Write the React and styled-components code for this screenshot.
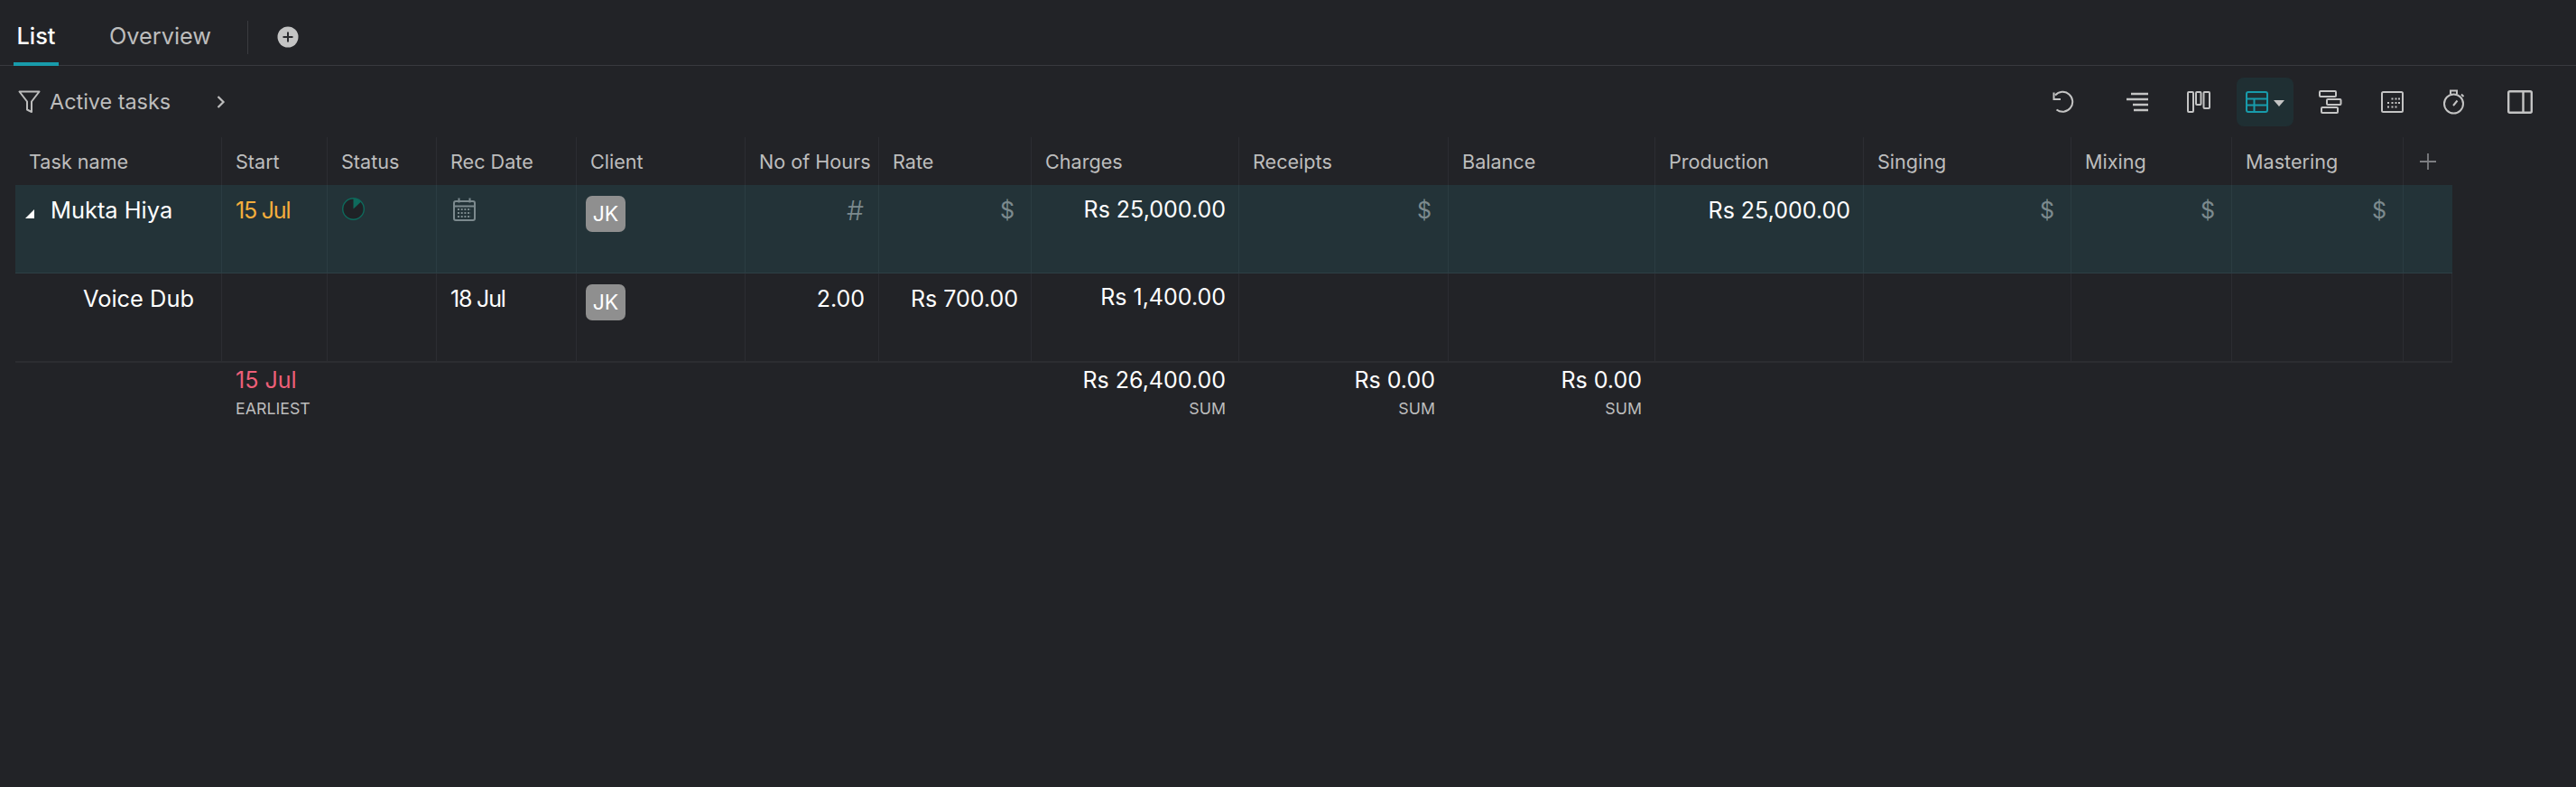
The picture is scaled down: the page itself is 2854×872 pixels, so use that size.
import React from 'react'
import styled, {createGlobalStyle} from 'styled-components'

const GlobalStyle = createGlobalStyle`
  html, body {
    margin: 0;
    padding: 0;
    height: 100%;
    background: #222327;
  }
  body {
    font-family: Inter, "Noto Sans", sans-serif;
    color: #fff;
    overflow: hidden;
  }
`

const COLUMNS = '229px 117px 121px 155px 187px 148px 169px 230px 232px 229px 231px 230px 178px 190px 54px'

const Page = styled.div`
  width: 2854px;
  height: 872px;
  background: #222327;
`

const TabBar = styled.div`
  display: flex;
  align-items: stretch;
  height: 72px;
  padding-left: 15px;
  border-bottom: 1px solid #38393e;
`

const Tab = styled.div`
  display: flex;
  align-items: center;
  justify-content: center;
  width: ${p => p.$width}px;
  height: 73px;
  padding-top: 9px;
  box-sizing: border-box;
  margin-right: ${p => p.$gap}px;
  font-size: 25.3px;
  font-weight: ${p => (p.$active ? 500 : 400)};
  color: ${p => (p.$active ? '#fff' : '#bdbdbd')};
  border-bottom: 4px solid ${p => (p.$active ? '#189bab' : 'transparent')};
`

const TabDivider = styled.div`
  width: 1px;
  height: 37px;
  margin: 23px 32px 0 0;
  background: #3a3b40;
`

const AddTab = styled.div`
  display: flex;
  align-items: center;
  height: 82px;
`

const Toolbar = styled.div`
  display: flex;
  align-items: center;
  height: 79px;
  padding-left: 20px;
  padding-right: 42px;
`

const FilterLabel = styled.span`
  margin-left: 10px;
  width: 184px;
  font-size: 23.4px;
  color: #bdbdbd;
`

const Tools = styled.div`
  display: flex;
  align-items: center;
  margin-left: auto;
`

const Tool = styled.div`
  display: flex;
  align-items: center;
  justify-content: center;
  gap: 6px;
  width: ${p => (p.$active ? 63 : 40)}px;
  height: 54px;
  margin-left: ${p => p.$gap || 0}px;
  border-radius: 8px;
  background: ${p => (p.$active ? '#1f2f33' : 'transparent')};
`

const Table = styled.div`
  width: 2700px;
  margin-left: 17px;
`

const Row = styled.div`
  display: grid;
  grid-template-columns: ${COLUMNS};
  height: ${p => p.$height}px;
  background: ${p => p.$bg || 'transparent'};
  border-bottom: ${p => p.$line || 'none'};
  box-sizing: border-box;
`

const HeadCell = styled.div`
  display: flex;
  align-items: center;
  padding-left: 15px;
  font-size: 21.6px;
  color: #bdbdbd;
  border-right: 1px solid #2c2d32;
  box-sizing: border-box;
  white-space: nowrap;
  &:last-child {
    border-right: none;
    padding-left: 17px;
  }
`

const Cell = styled.div`
  padding: ${p => p.$top || 12}px ${p => p.$right || 15}px 0 ${p => p.$left || 15}px;
  font-size: 25px;
  line-height: 32px;
  letter-spacing: ${p => (p.$tight ? '-1.2px' : 'normal')};
  text-align: ${p => (p.$num ? 'right' : 'left')};
  color: ${p => p.$color || '#fff'};
  border-right: 1px solid ${p => p.$border || '#2c2d32'};
  box-sizing: border-box;
  white-space: nowrap;
`

const Name = styled.div`
  display: flex;
  align-items: center;
  font-size: 25.4px;
`

const Expander = styled.span`
  width: 0;
  height: 0;
  margin: 8px 18px 0 10px;
  border-left: 10px solid transparent;
  border-bottom: 10px solid #fff;
`

const Placeholder = styled.span`
  font-size: ${p => p.$size || 25}px;
  color: #7c8a8e;
  font-weight: ${p => (p.$size ? 300 : 400)};
`

const Avatar = styled.div`
  display: flex;
  align-items: center;
  justify-content: center;
  width: 44px;
  height: 40px;
  margin: 0 0 0 -5px;
  border-radius: 7px;
  background: #8f8f8f;
  color: #fff;
  font-size: 23px;
`

const FootCell = styled.div`
  padding: 3px 15px 0;
  text-align: ${p => (p.$num ? 'right' : 'left')};
  box-sizing: border-box;
`

const FootValue = styled.div`
  font-size: 25px;
  line-height: 32px;
  color: ${p => p.$color || '#fff'};
  white-space: nowrap;
`

const FootLabel = styled.div`
  margin-top: 4px;
  font-size: 17.8px;
  line-height: 24px;
  color: #bdbdbd;
`

const PlusCircle = () => (
  <svg width="24" height="24" viewBox="0 0 24 24">
    <circle cx="12" cy="12" r="11.5" fill="#c4c4c4" />
    <path d="M12 6.500v11M6.500 12h11" stroke="#2a2b2f" strokeWidth="2" />
  </svg>
)

const FilterIcon = () => (
  <svg width="25" height="26" viewBox="0 0 25 26" fill="none" stroke="#bdbdbd" strokeWidth="2" strokeLinejoin="round">
    <path d="M1.500 1.500h22l-8.500 11v11.500l-5-2.500v-9z" />
  </svg>
)

const Chevron = () => (
  <svg width="12" height="16" viewBox="0 0 12 16" fill="none" stroke="#bdbdbd" strokeWidth="2.200">
    <path d="M2.500 2l6 6-6 6" />
  </svg>
)

const UndoIcon = () => (
  <svg width="26" height="26" viewBox="0 0 26 26" fill="none" stroke="#c4c4c4" strokeWidth="2">
    <path d="M5 5.500A11 11 0 1 1 6.500 21.500" />
    <path d="M3.500 2.500v7.500h7.500" />
  </svg>
)

const LinesIcon = () => (
  <svg width="26" height="22" viewBox="0 0 26 22" fill="none" stroke="#c4c4c4" strokeWidth="2.400">
    <path d="M6 2h19M1 8h24M8 14h17M9 20h16" />
  </svg>
)

const BoardIcon = () => (
  <svg width="26" height="24" viewBox="0 0 26 24" fill="none" stroke="#c4c4c4" strokeWidth="2">
    <rect x="1" y="1" width="6" height="22" rx="1" />
    <rect x="10" y="1" width="5.500" height="14" rx="1" />
    <rect x="18.500" y="1" width="6.500" height="18" rx="1" />
  </svg>
)

const TableIcon = () => (
  <svg width="25" height="24" viewBox="0 0 25 24" fill="none" stroke="#189bab" strokeWidth="2">
    <rect x="1" y="1" width="23" height="22" rx="2" />
    <path d="M1 8.500h23M1 15.500h23M9.500 8.500v14.500" />
  </svg>
)

const Caret = styled.span`
  width: 0;
  height: 0;
  margin-top: 3px;
  border-left: 6px solid transparent;
  border-right: 6px solid transparent;
  border-top: 7px solid #c4c4c4;
`

const GanttIcon = () => (
  <svg width="26" height="26" viewBox="0 0 26 26" fill="none" stroke="#c4c4c4" strokeWidth="2">
    <rect x="1" y="1" width="18" height="6" rx="1" />
    <rect x="9" y="10" width="15.500" height="6" rx="1" />
    <rect x="3" y="19" width="18" height="6" rx="1" />
  </svg>
)

const GridIcon = () => (
  <svg width="25" height="24" viewBox="0 0 25 24" fill="none" stroke="#c4c4c4">
    <rect x="1" y="1" width="23" height="22" rx="1.500" strokeWidth="2" />
    <path d="M11.500 8.500h2M15.500 8.500h2M19 8.500h2M7 13h2M11.500 13h2M15.500 13h2M19 13h2M7 17.500h2M11.500 17.500h2M15.500 17.500h2" strokeWidth="2" />
  </svg>
)

const TimerIcon = () => (
  <svg width="26" height="28" viewBox="0 0 26 28" fill="none" stroke="#c4c4c4" strokeWidth="2">
    <circle cx="12.500" cy="16" r="10.500" />
    <path d="M9 5V1.500h7V5M21 5.500l2.500 2.500M12 18l4.500-5.500" />
  </svg>
)

const PanelIcon = () => (
  <svg width="28" height="26" viewBox="0 0 28 26" fill="none" stroke="#c4c4c4" strokeWidth="2.400">
    <rect x="1.200" y="1.200" width="25.600" height="23.600" rx="1.500" />
    <path d="M17.500 1.200v23.600" />
  </svg>
)

const CellIcon = styled.svg`
  display: block;
  margin-top: 2px;
`

const StatusIcon = () => (
  <CellIcon width="25" height="25" viewBox="0 0 25 25">
    <circle cx="12.500" cy="12.500" r="11.800" fill="#1f2226" stroke="#0e6a5c" strokeWidth="1.400" />
    <path d="M12.500 12.500V1a11.500 11.500 0 0 1 8.500 3.500z" fill="#0e6a5c" />
  </CellIcon>
)

const CalendarIcon = () => (
  <CellIcon width="25" height="26" viewBox="0 0 25 26" fill="none" stroke="#7c8a8e">
    <rect x="1" y="4" width="23" height="21" rx="2" strokeWidth="2" />
    <path d="M1 9.500h23M6.500 0.500v5M18.500 0.500v5" strokeWidth="2" />
    <path d="M5 13h15M5 17h15M5 21h15" strokeWidth="2" strokeDasharray="2 1.700" />
  </CellIcon>
)

const AddIcon = () => (
  <svg width="20" height="20" viewBox="0 0 20 20" stroke="#7d7e82" strokeWidth="1.800">
    <path d="M10 1v18M1 10h18" />
  </svg>
)

const headers = ['Task name', 'Start', 'Status', 'Rec Date', 'Client', 'No of Hours', 'Rate', 'Charges', 'Receipts', 'Balance', 'Production', 'Singing', 'Mixing', 'Mastering']

const App = () => (
  <Page>
    <GlobalStyle />
    <TabBar>
      <Tab $active $width={50} $gap={57}>List</Tab>
      <Tab $width={111} $gap={41}>Overview</Tab>
      <TabDivider />
      <AddTab><PlusCircle /></AddTab>
    </TabBar>

    <Toolbar>
      <FilterIcon />
      <FilterLabel>Active tasks</FilterLabel>
      <Chevron />
      <Tools>
        <Tool><UndoIcon /></Tool>
        <Tool $gap={43}><LinesIcon /></Tool>
        <Tool $gap={28}><BoardIcon /></Tool>
        <Tool $gap={22} $active><TableIcon /><Caret /></Tool>
        <Tool $gap={21}><GanttIcon /></Tool>
        <Tool $gap={28}><GridIcon /></Tool>
        <Tool $gap={29}><TimerIcon /></Tool>
        <Tool $gap={33}><PanelIcon /></Tool>
      </Tools>
    </Toolbar>

    <Table>
      <Row $height={53}>
        {headers.map(h => <HeadCell key={h}>{h}</HeadCell>)}
        <HeadCell><AddIcon /></HeadCell>
      </Row>

      <Row $height={98} $bg="#233338" $line="1px solid #2d3f45">
        <Cell $left={1} $border="#2b3c42"><Name><Expander />Mukta Hiya</Name></Cell>
        <Cell $tight $color="#f6ae3c" $border="#2b3c42">15 Jul</Cell>
        <Cell $left={16} $border="#2b3c42"><StatusIcon /></Cell>
        <Cell $left={18} $border="#2b3c42"><CalendarIcon /></Cell>
        <Cell $border="#2b3c42"><Avatar>JK</Avatar></Cell>
        <Cell $num $right={16} $border="#2b3c42"><Placeholder $size={30}>#</Placeholder></Cell>
        <Cell $num $right={18} $border="#2b3c42"><Placeholder>$</Placeholder></Cell>
        <Cell $num $top={11} $right={14} $border="#2b3c42">Rs 25,000.00</Cell>
        <Cell $num $right={18} $border="#2b3c42"><Placeholder>$</Placeholder></Cell>
        <Cell $border="#2b3c42" />
        <Cell $num $right={14} $border="#2b3c42">Rs 25,000.00</Cell>
        <Cell $num $right={18} $border="#2b3c42"><Placeholder>$</Placeholder></Cell>
        <Cell $num $right={18} $border="#2b3c42"><Placeholder>$</Placeholder></Cell>
        <Cell $num $right={18} $border="#2b3c42"><Placeholder>$</Placeholder></Cell>
        <Cell $border="transparent" />
      </Row>

      <Row $height={99} $line="2px solid #2c2d31">
        <Cell $left={75}><Name>Voice Dub</Name></Cell>
        <Cell />
        <Cell />
        <Cell $tight>18 Jul</Cell>
        <Cell><Avatar>JK</Avatar></Cell>
        <Cell $num $right={15}>2.00</Cell>
        <Cell $num $right={14}>Rs 700.00</Cell>
        <Cell $num $top={10} $right={14}>Rs 1,400.00</Cell>
        <Cell />
        <Cell />
        <Cell />
        <Cell />
        <Cell />
        <Cell />
        <Cell />
      </Row>

      <Row $height={80}>
        <FootCell />
        <FootCell>
          <FootValue $color="#ee5f78">15 Jul</FootValue>
          <FootLabel>EARLIEST</FootLabel>
        </FootCell>
        <FootCell />
        <FootCell />
        <FootCell />
        <FootCell />
        <FootCell />
        <FootCell $num>
          <FootValue>Rs 26,400.00</FootValue>
          <FootLabel>SUM</FootLabel>
        </FootCell>
        <FootCell $num>
          <FootValue>Rs 0.00</FootValue>
          <FootLabel>SUM</FootLabel>
        </FootCell>
        <FootCell $num>
          <FootValue>Rs 0.00</FootValue>
          <FootLabel>SUM</FootLabel>
        </FootCell>
      </Row>
    </Table>
  </Page>
)

export default App
